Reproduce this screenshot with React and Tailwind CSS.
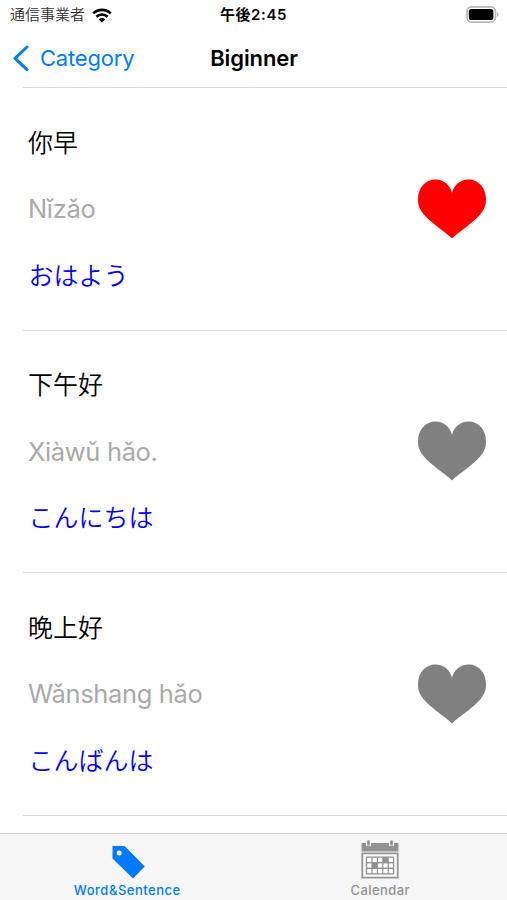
import React, { useState } from 'react';

const words = [
  { id: 1, chinese: '你早', pinyin: 'Nǐzǎo', japanese: 'おはよう', favorite: true },
  { id: 2, chinese: '下午好', pinyin: 'Xiàwǔ hǎo.', japanese: 'こんにちは', favorite: false },
  { id: 3, chinese: '晚上好', pinyin: 'Wǎnshang hǎo', japanese: 'こんばんは', favorite: false },
];

function WifiIcon() {
  return (
    <svg width="20" height="15" viewBox="0 0 20 15" fill="none" stroke="#000" strokeWidth="2.7">
      <path d="M1.200 5.400a12.600 12.600 0 0 1 17.600 0" />
      <path d="M4.400 8.800a8 8 0 0 1 11.200 0" />
      <path d="M10 14.600 6.800 11.400a4.700 4.700 0 0 1 6.400 0Z" fill="#000" stroke="none" />
    </svg>
  );
}

function BatteryIcon() {
  return (
    <svg width="33" height="17" viewBox="0 0 33 17">
      <rect x="0.9" y="0.9" width="28.600" height="15.200" rx="4.600" fill="none" stroke="#b8b8b8" strokeWidth="1.700" />
      <rect x="2.800" y="3" width="24.600" height="11" rx="2.600" fill="#000" />
      <path d="M31 6v5c1-.5 1.600-1.400 1.600-2.500S32 6.500 31 6Z" fill="#b8b8b8" />
    </svg>
  );
}

function HeartIcon() {
  return (
    <svg width="68" height="60" viewBox="0 0 68 60" fill="currentColor">
      <path d="M34 59.500C25 51 12 43.500 5 34.500C1.500 30 0 26 0 20.500C0 8.500 7.500 0.500 17.500 0.500C26 0.500 32 6 34 14C36 6 42 0.500 50.500 0.500C60.500 0.500 68 8.500 68 20.500C68 26 66.500 30 63 34.500C56 43.500 43 51 34 59.500Z" />
    </svg>
  );
}

function TagIcon() {
  return (
    <svg width="33" height="33" viewBox="0 0 33 33" fill="currentColor">
      <path fillRule="evenodd" d="M0.500 0H12.500L32.800 20.500L21 32.500L0.500 12.500ZM7.200 4.400a2.500 2.500 0 1 0 0 5a2.500 2.500 0 1 0 0-5Z" />
    </svg>
  );
}

function CalendarIcon() {
  const columns = [0, 1, 2, 3, 4];
  const rows = [0, 1, 2];
  return (
    <svg width="38" height="39" viewBox="0 0 38 39">
      <path d="M0.500 3H37.500V11.500H0.500Z" fill="#929292" />
      <path d="M5 0h5v6H5ZM28 0h5v6h-5Z" fill="#f6f6f6" />
      <path d="M6.200 0.500h2.600v5H6.200ZM29.200 0.500h2.600v5h-2.600Z" fill="#929292" />
      <rect x="1.300" y="13.400" width="35.400" height="24.200" fill="#fafafa" stroke="#929292" strokeWidth="1.700" />
      <rect x="4.800" y="16.500" width="28.400" height="18" fill="#929292" />
      {rows.map((row) =>
        columns.map((col) => {
          const marked = (row === 0 && col === 3) || (row === 1 && col === 1);
          return marked ? null : (
            <rect key={`${row}-${col}`} x={6.200 + col * 5.400} y={17.800 + row * 5.600} width="4.200" height="4.200" fill="#fff" />
          );
        })
      )}
    </svg>
  );
}

export default function App() {
  const [items, setItems] = useState(words);
  const [tab, setTab] = useState('words');

  const toggleFavorite = (id) => {
    setItems(items.map((item) => (item.id === id ? { ...item, favorite: !item.favorite } : item)));
  };

  return (
    <div className="flex h-screen w-full flex-col overflow-hidden bg-white font-[Inter,'Noto_Sans_CJK_JP',sans-serif]">
      <div className="grid h-[30px] shrink-0 grid-cols-3 items-center pr-2 pl-[10px] text-[15px]">
        <div className="flex items-center gap-[7px] text-[#333]">
          <span className="font-[350] whitespace-nowrap">通信事業者</span>
          <WifiIcon />
        </div>
        <div className="pr-[2px] text-center font-semibold tracking-[0.6px] whitespace-nowrap">午後2:45</div>
        <div className="flex justify-end pb-[2px]">
          <BatteryIcon />
        </div>
      </div>

      <div className="grid h-[57px] shrink-0 grid-cols-3 items-center pr-3 pb-[1px] pl-[13px]">
        <button type="button" className="flex items-center gap-[11px] text-[22px] tracking-[-0.2px] text-[#007aff]">
          <svg width="16" height="26" viewBox="0 0 16 26" fill="none" stroke="currentColor" strokeWidth="3" strokeLinecap="round" strokeLinejoin="round">
            <path d="M14 2L2 13.300L14 24.600" />
          </svg>
          <span>Category</span>
        </button>
        <h1 className="text-center text-[22px] font-semibold tracking-[-0.1px]">Biginner</h1>
      </div>

      <ul className="ml-[23px] min-h-0 flex-1 overflow-hidden border-t border-[#dcdcdc]">
        {items.map((item) => (
          <li key={item.id} className="flex h-[242.500px] items-center justify-between border-b border-[#dcdcdc] pr-[21.500px] pl-[5px]">
            <div className="text-[25px] leading-[67.500px]">
              <p className="font-['Noto_Sans_CJK_SC',sans-serif] font-[350] text-black" lang="zh">{item.chinese}</p>
              <p className="text-[25.500px] tracking-[-0.35px] text-[#aaa]">{item.pinyin}</p>
              <p className="pl-[0.500px] font-[350] text-[#0000ff]" lang="ja">{item.japanese}</p>
            </div>
            <button type="button" onClick={() => toggleFavorite(item.id)} className={item.favorite ? 'text-[#ff0000]' : 'text-[#808080]'}>
              <HeartIcon />
            </button>
          </li>
        ))}
      </ul>

      <div className="grid h-[67px] shrink-0 grid-cols-2 border-t border-[#cfcfcf] bg-[#f6f6f6] text-[13px] font-medium">
        <button
          type="button"
          onClick={() => setTab('words')}
          className={`flex flex-col items-center justify-end pb-[2px] ${tab === 'words' ? 'text-[#007aff]' : 'text-[#929292]'}`}
        >
          <span className="ml-[3px]">
            <TagIcon />
          </span>
          <span className="mt-[3px] ml-px leading-[16px] tracking-[0.5px]">Word&amp;Sentence</span>
        </button>
        <button
          type="button"
          onClick={() => setTab('calendar')}
          className={`flex flex-col items-center justify-end pb-[2px] ${tab === 'calendar' ? 'text-[#007aff]' : 'text-[#929292]'}`}
        >
          <CalendarIcon />
          <span className="mt-[3px] leading-[16px] tracking-[0.4px]">Calendar</span>
        </button>
      </div>
    </div>
  );
}
